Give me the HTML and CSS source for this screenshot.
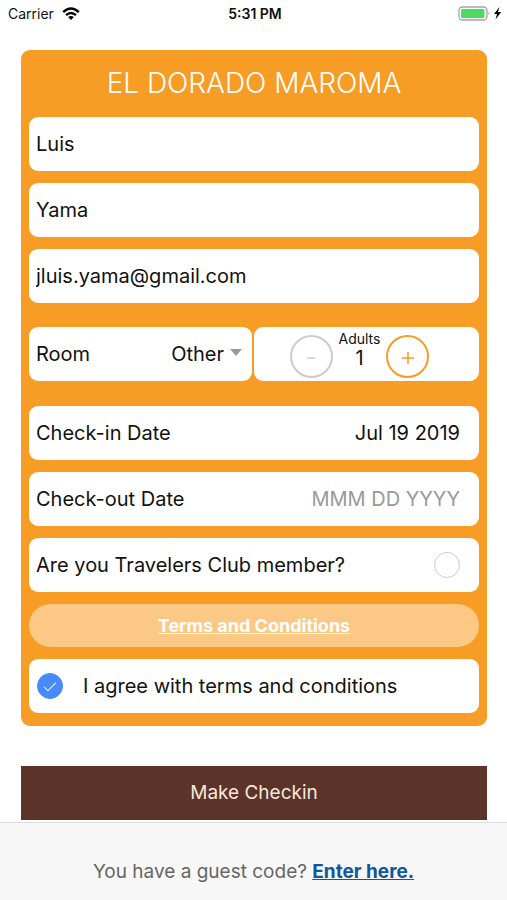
FILE: index.html
```html
<!DOCTYPE html>
<html lang="en">
<head>
<meta charset="utf-8">
<meta name="viewport" content="width=device-width, initial-scale=1">
<title>Check-in</title>
<link rel="stylesheet" href="styles.css">
</head>
<body>
<header class="status">
  <div class="status-side">
    <span>Carrier</span>
    <svg class="wifi" viewBox="0 0 18 14" width="18" height="14" aria-hidden="true">
      <g fill="none" stroke="#000" stroke-width="2.4">
        <path d="M1.2 5.2Q9-2.2 16.8 5.2"/>
        <path d="M4 8.2Q9 3.6 14 8.2"/>
      </g>
      <path d="M6.1 10Q9 7.8 11.900 10L9 13Z"/>
    </svg>
  </div>
  <strong class="clock">5:31 PM</strong>
  <div class="status-side status-end">
    <svg viewBox="0 0 44 16" width="44" height="16" aria-hidden="true">
      <rect x="1" y="1" width="28" height="13" rx="3.500" fill="#fff" stroke="#a5a5a5" stroke-width="1.300"/>
      <rect x="3" y="3" width="23.500" height="9" rx="1.500" fill="#4cd964"/>
      <path d="M30.500 5.500q2 2 0 4z" fill="#a5a5a5"/>
      <path d="M41.500 1L36 8h3l-1.500 5.500L43.200 6h-3.200z"/>
    </svg>
  </div>
</header>

<main class="page">
  <form class="form">
    <section class="card">
      <h1 class="title">EL DORADO MAROMA</h1>
      <input class="field" type="text" aria-label="First name" value="Luis">
      <input class="field" type="text" aria-label="Last name" value="Yama">
      <input class="field" type="email" aria-label="Email" value="jluis.yama@gmail.com">

      <div class="split">
        <div class="field room">
          <label for="room">Room</label>
          <select id="room" class="room-select">
            <option>Other</option>
          </select>
          <svg class="caret" viewBox="0 0 12 7" width="12" height="7" aria-hidden="true"><path d="M0 0h12L6 7z" fill="#999"/></svg>
        </div>
        <div class="field adults">
          <button class="step" type="button" aria-label="Fewer adults" disabled>
            <svg viewBox="0 0 14 14" width="14" height="14" aria-hidden="true"><path d="M3 8h8"/></svg>
          </button>
          <div class="count">
            <label class="count-label" for="adults">Adults</label>
            <output id="adults" class="count-value">1</output>
          </div>
          <button class="step" type="button" aria-label="More adults">
            <svg viewBox="0 0 14 14" width="14" height="14" aria-hidden="true"><path d="M1 8h12M7 2v12"/></svg>
          </button>
        </div>
      </div>

      <div class="field row">
        <label for="checkin">Check-in Date</label>
        <input id="checkin" class="date" type="text" value="Jul 19 2019">
      </div>
      <div class="field row">
        <label for="checkout">Check-out Date</label>
        <input id="checkout" class="date" type="text" placeholder="MMM DD YYYY">
      </div>
      <div class="field row">
        <label for="member">Are you Travelers Club member?</label>
        <input id="member" class="check" type="checkbox">
      </div>
      <a class="terms" href="#terms">Terms and Conditions</a>
      <div class="field agree">
        <input id="agree" class="check" type="checkbox" checked>
        <label for="agree">I agree with terms and conditions</label>
      </div>
    </section>
    <button class="submit" type="submit">Make Checkin</button>
  </form>
</main>

<footer class="footer">
  <p class="guest">You have a guest code? <a class="enter" href="#code">Enter here.</a></p>
</footer>
</body>
</html>
```
FILE: styles.css
```css
* {
  box-sizing: border-box;
}

body {
  margin: 0;
  min-height: 100vh;
  display: flex;
  flex-direction: column;
  background: #fff;
  color: #111;
  font: 20px/24px Inter, "Liberation Sans", sans-serif;
}

input,
select,
button {
  margin: 0;
  padding: 0;
  border: 0;
  background: none;
  color: inherit;
  font: inherit;
}

.status {
  display: flex;
  align-items: center;
  height: 28px;
  padding: 0 5px 0 8px;
  font-size: 14px;
}

.status-side {
  display: flex;
  flex: 1;
  align-items: center;
  gap: 8px;
}

.status-end {
  justify-content: flex-end;
}

.clock {
  font-weight: 600;
}

.page {
  flex: 1;
  padding: 22px 20px 2px 21px;
}

.form {
  display: flex;
  flex-direction: column;
  gap: 40px;
}

.card {
  display: flex;
  flex-direction: column;
  gap: 12px;
  padding: 12px 8px 13px;
  border-radius: 9px;
  background: #f79c25;
}

.title {
  margin: 0;
  color: #fff;
  font-size: 28px;
  font-weight: 300;
  line-height: 43px;
  text-align: center;
}

.field {
  width: 100%;
  height: 54px;
  padding: 0 7px;
  border-radius: 9px;
  background: #fff;
}

.split {
  display: grid;
  grid-template-columns: 223px 1fr;
  gap: 2px;
  margin: 12px 0 13px;
}

.row,
.room,
.adults,
.agree {
  display: flex;
  align-items: center;
}

.row {
  justify-content: space-between;
  padding-right: 19px;
}

.room {
  gap: 6px;
  padding-right: 10px;
}

.room-select {
  flex: 1;
  min-width: 0;
  appearance: none;
  text-align-last: right;
}

.caret {
  margin-bottom: 4px;
}

.adults {
  justify-content: center;
  gap: 6px;
  padding: 0 14px 0 0;
}

.step {
  display: flex;
  align-items: center;
  justify-content: center;
  width: 43px;
  height: 43px;
  margin-top: 5px;
  border: 2px solid currentColor;
  border-radius: 50%;
  color: #f79c25;
}

.step:disabled {
  color: #ccc;
}

.step path {
  fill: none;
  stroke: currentColor;
  stroke-width: 1.5;
}

.count {
  display: flex;
  flex-direction: column;
  align-items: center;
  margin-bottom: 8px;
}

.count-label {
  font-size: 14px;
  line-height: 16px;
}

.count-value {
  line-height: 22px;
}

.date {
  flex: 1;
  min-width: 0;
  text-align: right;
}

.date::placeholder {
  color: #999;
  opacity: 1;
}

.check {
  display: grid;
  flex: none;
  place-items: center;
  width: 26px;
  height: 26px;
  appearance: none;
  border: 1px solid #ccc;
  border-radius: 50%;
}

.check:checked {
  border-color: #488aff;
  background: #488aff;
}

.check:checked::before {
  content: "";
  width: 5px;
  height: 11px;
  margin-bottom: 3px;
  border: solid #fff;
  border-width: 0 1px 1px 0;
  transform: rotate(45deg);
}

.agree {
  gap: 20px;
  padding-left: 8px;
}

.terms {
  border-radius: 22px;
  background: #fbc886;
  color: #fff;
  font-size: 18px;
  font-weight: 700;
  line-height: 43px;
  text-align: center;
}

.submit {
  height: 54px;
  background: #5c3329;
  color: #f7e8dc;
  font-size: 19px;
}

.footer {
  height: 78px;
  padding-top: 37px;
  border-top: 1px solid #dcdcdc;
  background: #f7f7f7;
  color: #666;
  font-size: 19px;
  text-align: center;
}

.guest {
  margin: 0;
}

.enter {
  color: #0f559f;
  font-weight: 700;
}
```
